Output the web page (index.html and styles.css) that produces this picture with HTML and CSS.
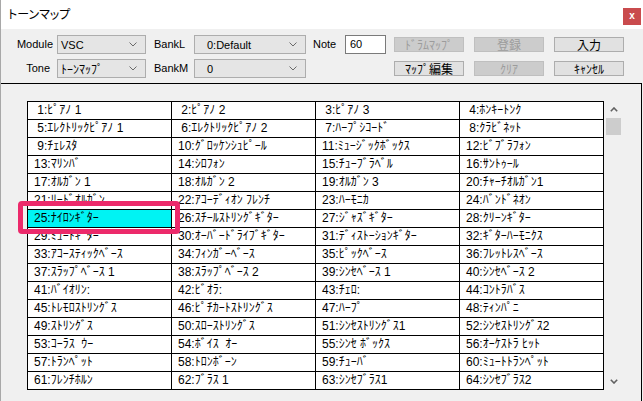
FILE: index.html
```html
<!DOCTYPE html>
<html lang="ja">
<head>
<meta charset="utf-8">
<title>トーンマップ</title>
<link rel="stylesheet" href="styles.css">
</head>
<body>
<div class="window">
  <div class="titlebar">
    <span class="title">トーンマップ</span>
    <span class="close">x</span>
  </div>
  <div class="toolbar">
    <span class="lbl lbl-r">Module</span>
    <div class="combo"><span>VSC</span><svg class="chev" viewBox="0 0 8 5"><polyline points="0.5,0.5 4,4 7.5,0.5" fill="none" stroke="#6a6a6a" stroke-width="1"/></svg></div>
    <span class="lbl">BankL</span>
    <div class="combo combo-wide"><span>0:Default</span><svg class="chev" viewBox="0 0 8 5"><polyline points="0.5,0.5 4,4 7.5,0.5" fill="none" stroke="#6a6a6a" stroke-width="1"/></svg></div>
    <span class="lbl lbl-note">Note</span>
    <div class="edit">60</div>
    <button class="btn off">ﾄﾞﾗﾑﾏｯﾌﾟ</button>
    <button class="btn off">登録</button>
    <button class="btn">入力</button>

    <span class="lbl lbl-r lbl-tone">Tone</span>
    <div class="combo"><span class="jp">ﾄｰﾝﾏｯﾌﾟ</span><svg class="chev" viewBox="0 0 8 5"><polyline points="0.5,0.5 4,4 7.5,0.5" fill="none" stroke="#6a6a6a" stroke-width="1"/></svg></div>
    <span class="lbl">BankM</span>
    <div class="combo combo-wide"><span>0</span><svg class="chev" viewBox="0 0 8 5"><polyline points="0.5,0.5 4,4 7.5,0.5" fill="none" stroke="#6a6a6a" stroke-width="1"/></svg></div>
    <button class="btn row2-start">ﾏｯﾌﾟ編集</button>
    <button class="btn off">ｸﾘｱ</button>
    <button class="btn">ｷｬﾝｾﾙ</button>
  </div>
  <div class="panel">
    <div class="list">
      <div class="grid">
        <div class="cell"> 1:ﾋﾟｱﾉ 1</div><div class="cell"> 2:ﾋﾟｱﾉ 2</div><div class="cell"> 3:ﾋﾟｱﾉ 3</div><div class="cell"> 4:ﾎﾝｷｰﾄﾝｸ</div>
        <div class="cell"> 5:ｴﾚｸﾄﾘｯｸﾋﾟｱﾉ 1</div><div class="cell"> 6:ｴﾚｸﾄﾘｯｸﾋﾟｱﾉ 2</div><div class="cell"> 7:ﾊｰﾌﾟｼｺｰﾄﾞ</div><div class="cell"> 8:ｸﾗﾋﾞﾈｯﾄ</div>
        <div class="cell"> 9:ﾁｪﾚｽﾀ</div><div class="cell">10:ｸﾞﾛｯｹﾝｼｭﾋﾟｰﾙ</div><div class="cell">11:ﾐｭｰｼﾞｯｸﾎﾞｯｸｽ</div><div class="cell">12:ﾋﾞﾌﾞﾗﾌｫﾝ</div>
        <div class="cell">13:ﾏﾘﾝﾊﾞ</div><div class="cell">14:ｼﾛﾌｫﾝ</div><div class="cell">15:ﾁｭｰﾌﾞﾗﾍﾞﾙ</div><div class="cell">16:ｻﾝﾄｩｰﾙ</div>
        <div class="cell">17:ｵﾙｶﾞﾝ 1</div><div class="cell">18:ｵﾙｶﾞﾝ 2</div><div class="cell">19:ｵﾙｶﾞﾝ 3</div><div class="cell">20:ﾁｬｰﾁｵﾙｶﾞﾝ1</div>
        <div class="cell">21:ﾘｰﾄﾞｵﾙｶﾞﾝ</div><div class="cell">22:ｱｺｰﾃﾞｨｵﾝ ﾌﾚﾝﾁ</div><div class="cell">23:ﾊｰﾓﾆｶ</div><div class="cell">24:ﾊﾞﾝﾄﾞﾈｵﾝ</div>
        <div class="cell sel">25:ﾅｲﾛﾝｷﾞﾀｰ</div><div class="cell">26:ｽﾁｰﾙｽﾄﾘﾝｸﾞｷﾞﾀｰ</div><div class="cell">27:ｼﾞｬｽﾞｷﾞﾀｰ</div><div class="cell">28:ｸﾘｰﾝｷﾞﾀｰ</div>
        <div class="cell">29:ﾐｭｰﾄｷﾞﾀｰ</div><div class="cell">30:ｵｰﾊﾞｰﾄﾞﾗｲﾌﾞｷﾞﾀｰ</div><div class="cell">31:ﾃﾞｨｽﾄｰｼｮﾝｷﾞﾀｰ</div><div class="cell">32:ｷﾞﾀｰﾊｰﾓﾆｸｽ</div>
        <div class="cell">33:ｱｺｰｽﾃｨｯｸﾍﾞｰｽ</div><div class="cell">34:ﾌｨﾝｶﾞｰﾍﾞｰｽ</div><div class="cell">35:ﾋﾟｯｸﾍﾞｰｽ</div><div class="cell">36:ﾌﾚｯﾄﾚｽﾍﾞｰｽ</div>
        <div class="cell">37:ｽﾗｯﾌﾟﾍﾞｰｽ 1</div><div class="cell">38:ｽﾗｯﾌﾟﾍﾞｰｽ 2</div><div class="cell">39:ｼﾝｾﾍﾞｰｽ 1</div><div class="cell">40:ｼﾝｾﾍﾞｰｽ 2</div>
        <div class="cell">41:ﾊﾞｲｵﾘﾝ:</div><div class="cell">42:ﾋﾞｵﾗ:</div><div class="cell">43:ﾁｪﾛ:</div><div class="cell">44:ｺﾝﾄﾗﾊﾞｽ</div>
        <div class="cell">45:ﾄﾚﾓﾛｽﾄﾘﾝｸﾞｽ</div><div class="cell">46:ﾋﾟﾁｶｰﾄｽﾄﾘﾝｸﾞｽ</div><div class="cell">47:ﾊｰﾌﾟ</div><div class="cell">48:ﾃｨﾝﾊﾟﾆ</div>
        <div class="cell">49:ｽﾄﾘﾝｸﾞｽ</div><div class="cell">50:ｽﾛｰｽﾄﾘﾝｸﾞｽ</div><div class="cell">51:ｼﾝｾｽﾄﾘﾝｸﾞｽ1</div><div class="cell">52:ｼﾝｾｽﾄﾘﾝｸﾞｽ2</div>
        <div class="cell">53:ｺｰﾗｽ  ｳｰ</div><div class="cell">54:ﾎﾞｲｽ  ｵｰ</div><div class="cell">55:ｼﾝｾ ﾎﾞｯｸｽ</div><div class="cell">56:ｵｰｹｽﾄﾗ ﾋｯﾄ</div>
        <div class="cell">57:ﾄﾗﾝﾍﾟｯﾄ</div><div class="cell">58:ﾄﾛﾝﾎﾞｰﾝ</div><div class="cell">59:ﾁｭｰﾊﾞ</div><div class="cell">60:ﾐｭｰﾄﾄﾗﾝﾍﾟｯﾄ</div>
        <div class="cell">61:ﾌﾚﾝﾁﾎﾙﾝ</div><div class="cell">62:ﾌﾞﾗｽ 1</div><div class="cell">63:ｼﾝｾﾌﾞﾗｽ1</div><div class="cell">64:ｼﾝｾﾌﾞﾗｽ2</div>
      </div>
      <div class="scroll">
        <div class="sb-btn"><svg width="8" height="5" viewBox="0 0 8 5"><polyline points="0.8,4.2 4,1 7.2,4.2" fill="none" stroke="#606060" stroke-width="1.6"/></svg></div>
        <div class="thumb"></div>
        <div class="track"></div>
        <div class="sb-btn"><svg width="8" height="5" viewBox="0 0 8 5"><polyline points="0.8,0.8 4,4 7.2,0.8" fill="none" stroke="#606060" stroke-width="1.6"/></svg></div>
      </div>
    </div>
    <div class="mark"></div>
  </div>
</div>
</body>
</html>
```

FILE: styles.css
```css
* { box-sizing: border-box; }
html, body { margin: 0; padding: 0; }
body {
  width: 643px;
  height: 401px;
  overflow: hidden;
  background: #f0f0f0;
  font-family: "Liberation Sans", "Noto Sans CJK JP", sans-serif;
  font-size: 12px;
  color: #000;
}
.window {
  height: 401px;
  border-left: 1px solid #a8a8a8;
  display: flex;
  flex-direction: column;
}
.titlebar {
  height: 29px;
  flex: none;
  background: #fff;
  display: flex;
  align-items: flex-start;
  justify-content: space-between;
}
.title {
  font-family: "Noto Sans CJK JP", sans-serif;
  font-feature-settings: "palt";
  font-size: 12px;
  line-height: 27px;
  padding-left: 7px;
}
.close {
  width: 18px;
  height: 17px;
  margin-top: 8px;
  margin-right: 2px;
  background: #c94b4d;
  color: #fff;
  font: bold 10px/16px "Liberation Sans", sans-serif;
  text-align: center;
}
.toolbar {
  flex: none;
  display: grid;
  grid-template-columns: 56px 89px 48px 112px 39px 41px 78px 80px 80px;
  grid-template-rows: 19px 19px;
  row-gap: 5px;
  padding: 6px 0 5px;
  align-items: center;
}
.lbl {
  font-size: 11px;
  line-height: 19px;
  padding-left: 8px;
  white-space: nowrap;
}
.lbl-r { text-align: right; padding: 0 4px 0 0; }
.lbl-tone { padding-right: 7px; }
.lbl-note { padding-left: 7px; }
.combo {
  height: 19px;
  border: 1px solid #adadad;
  background: #e5e5e5;
  display: flex;
  align-items: center;
  justify-content: space-between;
  padding: 0 8px 0 3px;
  font-size: 11px;
}
.combo .jp { font-size: 12px; }
.combo-wide { padding-left: 12px; }
.chev { width: 8px; height: 5px; }
.edit {
  height: 19px;
  border: 1px solid #7a7a7a;
  background: #fff;
  padding-left: 4px;
  line-height: 17px;
  font-size: 11px;
}
.btn {
  justify-self: end;
  width: 70px;
  height: 15px;
  margin: 0;
  padding: 0;
  border: 1px solid #adadad;
  background: #e1e1e1;
  color: #000;
  font-family: "Noto Sans CJK JP", sans-serif;
  font-size: 12px;
  line-height: 13px;
}
.btn.off {
  background: #cccccc;
  border-color: #bfbfbf;
  color: #9c9c9c;
}
.row2-start { grid-column: 7; }
.panel {
  position: relative;
  flex: 1;
  width: 641px;
  border-top: 1px solid #000;
  border-right: 1px solid #000;
  padding: 17px 0 0 26px;
}
.list {
  display: flex;
  align-items: flex-start;
}
.grid {
  display: grid;
  grid-template-columns: repeat(4, 144px);
  border-top: 1px solid #000;
  border-left: 1px solid #000;
  background: #fff;
}
.cell {
  height: 18px;
  border-right: 1px solid #000;
  border-bottom: 1px solid #000;
  padding-left: 6px;
  line-height: 17px;
  font-size: 12px;
  white-space: pre;
  overflow: hidden;
}
.cell.sel { background: #00f3f3; }
.scroll {
  width: 17px;
  height: 289px;
  margin-left: 1px;
  display: flex;
  flex-direction: column;
}
.sb-btn {
  height: 17px;
  display: flex;
  align-items: center;
  justify-content: center;
}
.thumb {
  height: 17px;
  margin: 0 1px;
  background: #cdcdcd;
}
.track { flex: 1; }
.mark {
  position: absolute;
  left: 17px;
  top: 117px;
  width: 162px;
  height: 33px;
  border: 5px solid #ec2a6b;
  border-radius: 4px;
}
```
